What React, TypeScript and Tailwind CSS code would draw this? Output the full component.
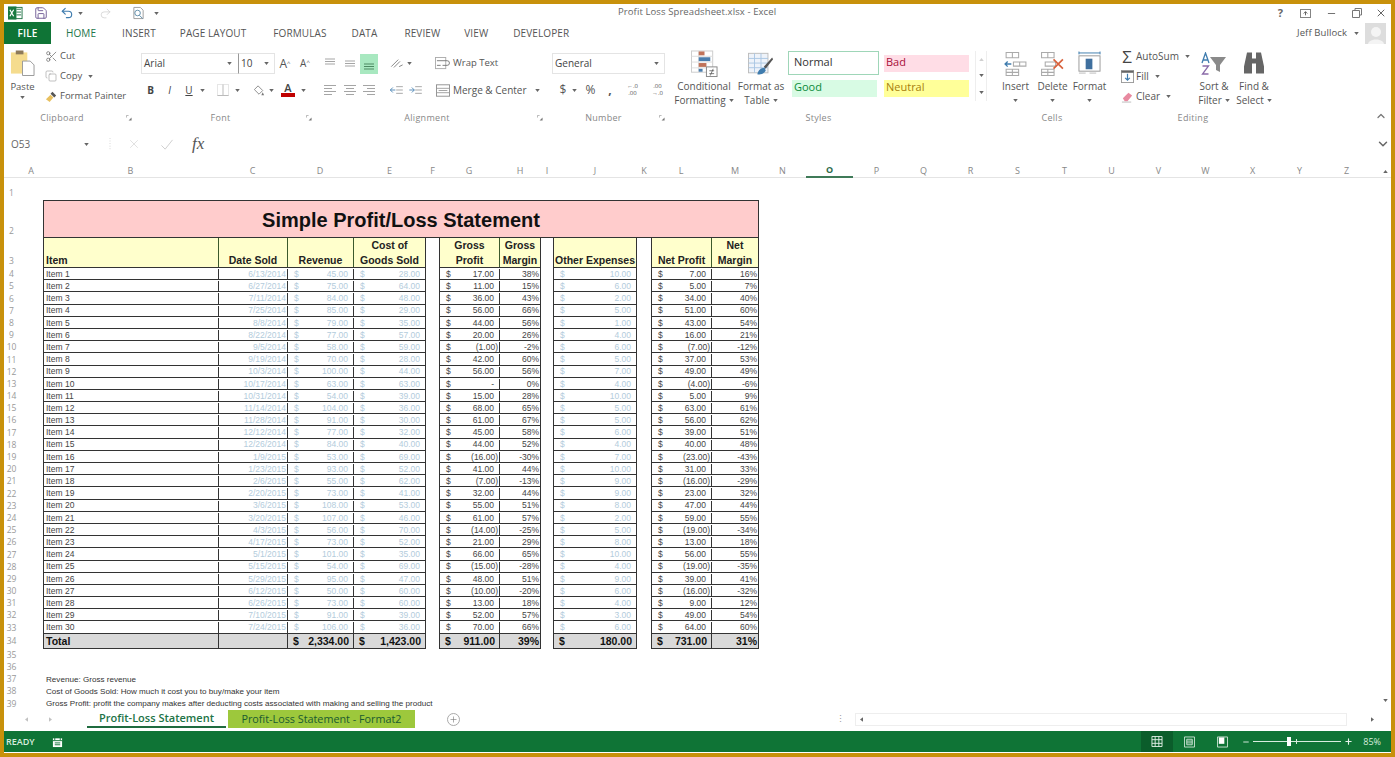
import type { ReactNode } from 'react';
import { ChevronDown, ChevronUp, Copy, Minus, Plus, Save, Scissors, Undo2, Redo2, X } from 'lucide-react';

const dates = ['6/13/2014', '6/27/2014', '7/11/2014', '7/25/2014', '8/8/2014', '8/22/2014', '9/5/2014', '9/19/2014', '10/3/2014', '10/17/2014', '10/31/2014', '11/14/2014', '11/28/2014', '12/12/2014', '12/26/2014', '1/9/2015', '1/23/2015', '2/6/2015', '2/20/2015', '3/6/2015', '3/20/2015', '4/3/2015', '4/17/2015', '5/1/2015', '5/15/2015', '5/29/2015', '6/12/2015', '6/26/2015', '7/10/2015', '7/24/2015'];
const revenue = [45, 75, 84, 85, 79, 77, 58, 70, 100, 63, 54, 104, 91, 77, 84, 53, 93, 55, 73, 108, 107, 56, 73, 101, 54, 95, 50, 73, 91, 106];
const cost = [28, 64, 48, 29, 35, 57, 59, 28, 44, 63, 39, 36, 30, 32, 40, 69, 52, 62, 41, 53, 46, 70, 52, 35, 69, 47, 60, 60, 39, 36];
const grossMargin = [38, 15, 43, 66, 56, 26, -2, 60, 56, 0, 28, 65, 67, 58, 52, -30, 44, -13, 44, 51, 57, -25, 29, 65, -28, 51, -20, 18, 57, 66];
const other = [10, 6, 2, 5, 1, 4, 6, 5, 7, 4, 10, 5, 5, 6, 4, 7, 10, 9, 9, 8, 2, 5, 8, 10, 4, 9, 6, 4, 3, 6];
const netMargin = [16, 7, 40, 60, 54, 21, -12, 53, 49, -6, 9, 61, 62, 51, 48, -43, 33, -29, 32, 44, 55, -34, 18, 55, -35, 41, -32, 12, 54, 60];

const columns: [string, number][] = [
  ['A', 24], ['B', 175], ['C', 69], ['D', 66], ['E', 73], ['F', 13], ['G', 60], ['H', 42], ['I', 12], ['J', 84], ['K', 14], ['L', 60], ['M', 48], ['N', 47],
  ['O', 47], ['P', 47], ['Q', 47], ['R', 47], ['S', 47], ['T', 47], ['U', 47], ['V', 47], ['W', 47], ['X', 47], ['Y', 47], ['Z', 47],
];

function money(value: number) {
  if (value === 0) return '-';
  const text = Math.abs(value).toFixed(2);
  return value < 0 ? `(${text})` : text;
}

function Caret({ className = '' }: { className?: string }) {
  return (
    <svg viewBox="0 0 6 4" className={`h-[3px] w-[5px] shrink-0 ${className}`}>
      <path d="M0 0h6L3 4z" fill="#666" />
    </svg>
  );
}

function Glyph({ children, className = 'h-[16px] w-[16px]' }: { children: ReactNode; className?: string }) {
  return (
    <svg viewBox="0 0 16 16" className={`shrink-0 ${className}`} fill="none" stroke="#8a8a8a" strokeWidth="1">
      {children}
    </svg>
  );
}

function Lines({ kind }: { kind: 'top' | 'mid' | 'bottom' | 'left' | 'center' | 'right' }) {
  const y = kind === 'top' ? [3, 5.5, 8] : kind === 'mid' ? [5, 7.5, 10] : kind === 'bottom' ? [8, 10.5, 13] : [3.5, 6.5, 9.5, 12.5];
  const x = (i: number): [number, number] => {
    if (kind === 'left') return i % 2 ? [2, 10] : [2, 14];
    if (kind === 'center') return i % 2 ? [4, 12] : [2, 14];
    if (kind === 'right') return i % 2 ? [6, 14] : [2, 14];
    return [3, 13];
  };
  return (
    <Glyph>
      {y.map((v, i) => (
        <line key={v} x1={x(i)[0]} x2={x(i)[1]} y1={v} y2={v} stroke={kind === 'bottom' ? '#4d8a63' : '#a5a5a5'} />
      ))}
    </Glyph>
  );
}

function SmallAction({ icon, label, caret, className = '' }: { icon: ReactNode; label: string; caret?: boolean; className?: string }) {
  return (
    <div className={`flex h-[20px] items-center ${className}`}>
      <span className="flex w-[16px] shrink-0 justify-center">{icon}</span>
      <span className="ml-[1px] whitespace-nowrap">{label}</span>
      {caret && <Caret className="ml-[6px]" />}
    </div>
  );
}

function LargeButton({ icon, lines, className }: { icon: ReactNode; lines: [string, string?]; className: string }) {
  return (
    <div className={`flex shrink-0 flex-col items-center pt-[5px] ${className}`}>
      <div className="flex h-[29px] items-center">{icon}</div>
      <div className="mt-[1px] flex h-[14px] items-center whitespace-nowrap">{lines[0]}</div>
      <div className="flex h-[14px] items-center gap-[3px] whitespace-nowrap">
        {lines[1]}
        <Caret />
      </div>
    </div>
  );
}

function Group({ label, launcher, className, children, labelClass = '' }: { label: string; launcher?: boolean; className: string; children: ReactNode; labelClass?: string }) {
  return (
    <div className={`flex shrink-0 flex-col ${className}`}>
      <div className="h-[64px]">{children}</div>
      <div className="mt-[2.500px] flex h-[14px] items-center text-[9px] tracking-[0.3px] text-[#888]">
        <span className={`flex-1 text-center ${labelClass}`}>{label}</span>
        {launcher && (
          <svg viewBox="0 0 7 7" className="mr-[3px] h-[6px] w-[6px]">
            <path d="M.5 3V.5H3" stroke="#aaa" fill="none" />
            <path d="M6.5 6.5H3l3.5-3.5z" fill="#777" />
          </svg>
        )}
      </div>
    </div>
  );
}

function TitleBar() {
  return (
    <div className="flex h-[18px] items-center text-[#666]">
      <svg viewBox="0 0 16 14" className="ml-[4px] h-[14px] w-[15px]">
        <rect x="6" y="1" width="9" height="12" fill="#fff" stroke="#217346" />
        <path d="M9 3h5M9 6h5M9 9h5" stroke="#217346" />
        <rect x="0" y="0" width="9" height="14" fill="#1a7a41" />
        <path d="M2 3.500l4 7M6 3.500l-4 7" stroke="#fff" strokeWidth="1.300" />
      </svg>
      <Save size={14} strokeWidth={1.6} className="ml-[11px] text-[#6f5a94]" />
      <Undo2 size={14} strokeWidth={2} className="ml-[12px] text-[#3f7cae]" />
      <Caret className="ml-[4px]" />
      <Redo2 size={13} strokeWidth={1.3} className="ml-[16px] text-[#ccc]" />
      <svg viewBox="0 0 14 14" className="ml-[20px] h-[14px] w-[13px]" fill="none">
        <path d="M2 1h7l3 3v9H2z" stroke="#999" />
        <circle cx="6" cy="7" r="3" stroke="#5b8aa8" />
        <path d="M8 9.500l3.500 3.500" stroke="#5b8aa8" />
      </svg>
      <Caret className="ml-[9px]" />
      <div className="mb-[2px] ml-[459px] w-[160px] text-[9.500px] tracking-[0.1px] whitespace-nowrap">Profit Loss Spreadsheet.xlsx - Excel</div>
      <div className="ml-auto flex items-center text-[#666]">
        <span className="text-[11px] font-bold">?</span>
        <svg viewBox="0 0 12 10" className="ml-[17px] h-[9px] w-[11px]" fill="none">
          <rect x=".5" y=".5" width="11" height="9" stroke="#777" />
          <path d="M6 7V3M4 5l2-2 2 2" stroke="#555" />
        </svg>
        <Minus size={11} strokeWidth={2} className="ml-[15px]" />
        <svg viewBox="0 0 10 10" className="ml-[15px] h-[10px] w-[10px]" fill="none">
          <path d="M3 2.500V.5h6.500V7H7.500M.5 2.500h7v7h-7z" stroke="#777" />
        </svg>
        <X size={12} strokeWidth={2} className="mr-[4px] ml-[13px]" />
      </div>
    </div>
  );
}

function TabRow() {
  return (
    <div className="flex h-[22px] items-center text-[10px] tracking-[0.1px] text-[#555]">
      <div className="flex h-[22px] w-[47px] items-center justify-center bg-[#0f7436] font-semibold text-white">FILE</div>
      <span className="ml-[15px] text-[#23764a]">HOME</span>
      <span className="ml-[26px]">INSERT</span>
      <span className="ml-[24px]">PAGE LAYOUT</span>
      <span className="ml-[27px]">FORMULAS</span>
      <span className="ml-[25px]">DATA</span>
      <span className="ml-[27px]">REVIEW</span>
      <span className="ml-[24px]">VIEW</span>
      <span className="ml-[25px]">DEVELOPER</span>
      <span className="ml-auto text-[9.500px]">Jeff Bullock</span>
      <Caret className="ml-[7px]" />
      <div className="mr-[5px] ml-[6px] flex h-[21px] w-[21px] items-end justify-center overflow-hidden bg-[#ddd]">
        <svg viewBox="0 0 20 20" className="h-[20px] w-[20px]">
          <circle cx="10" cy="8" r="5" fill="#f4f4f4" />
          <path d="M2 20c1-6 15-6 16 0z" fill="#f4f4f4" />
        </svg>
      </div>
    </div>
  );
}

function Ribbon() {
  return (
    <div className="flex h-[81px] text-[10px] text-[#555]">
      <Group label="Clipboard" launcher className="w-[131px]" labelClass="pr-[6px]">
        <div className="flex pt-[2px] text-[9.500px]">
          <div className="ml-[6px] flex w-[25px] flex-col items-center">
            <svg viewBox="0 0 26 28" className="mt-[3px] h-[28px] w-[25px]">
              <rect x="1" y="3" width="17" height="22" fill="#f5dc8e" />
              <rect x="6" y="1" width="8" height="4" fill="#8d7a5a" />
              <path d="M13 12h8l4 4v11H13z" fill="#fff" stroke="#999" />
            </svg>
            <span className="mt-[3px] h-[14px]">Paste</span>
            <Caret className="mt-[2px]" />
          </div>
          <div className="ml-[8px] flex flex-col">
            <SmallAction icon={<Scissors size={13} strokeWidth={1.3} className="text-[#666]" />} label="Cut" />
            <SmallAction icon={<Copy size={12} strokeWidth={1.2} className="text-[#999]" />} label="Copy" caret />
            <SmallAction
              icon={
                <svg viewBox="0 0 14 14" className="h-[13px] w-[13px]">
                  <path d="M8 2l4 4-2 2-4-4z" fill="#555" />
                  <path d="M6 5l3 3-4 5-4-3z" fill="#e8c060" />
                </svg>
              }
              label="Format Painter"
            />
          </div>
        </div>
      </Group>

      <Group label="Font" launcher className="w-[180px]">
        <div className="flex flex-col pt-[9px] pl-[6px]">
          <div className="flex h-[21px] items-center">
            <div className="flex h-[21px] w-[97px] items-center justify-between border-y border-l border-[#e4e4e4] pr-[6px] pl-[2px] text-[#444]">
              Arial
              <Caret />
            </div>
            <div className="flex h-[21px] w-[37px] items-center justify-between border border-[#e4e4e4] border-l-[#999] pr-[5px] pl-[2px] text-[#444]">
              10
              <Caret />
            </div>
            <span className="w-[20px] text-center text-[12px]">A<sup className="text-[6px]">^</sup></span>
            <span className="w-[20px] text-center text-[10px]">A<sup className="text-[6px]">^</sup></span>
          </div>
          <div className="mt-[6px] flex h-[20px] items-center">
            <span className="w-[19px] text-center font-bold text-[#444]">B</span>
            <span className="w-[19px] text-center italic text-[#444]">I</span>
            <span className="w-[20px] text-center text-[#444] underline">U</span>
            <Caret className="mr-[10px] ml-[1px]" />
            <Glyph>
              <rect x="2.500" y="2.500" width="11" height="11" stroke="#e6e6e6" />
              <path d="M8 2.500v11M2.500 13.500h11" stroke="#bbb" />
            </Glyph>
            <Caret className="mr-[12px] ml-[4px]" />
            <svg viewBox="0 0 14 14" className="h-[13px] w-[14px]" fill="none">
              <path d="M6 2l5 5-4 4-5-5z" stroke="#888" />
              <path d="M11 9l1.500 3h-3z" fill="#777" />
            </svg>
            <Caret className="mr-[6px] ml-[3px]" />
            <div className="flex w-[16px] flex-col items-center leading-[10px]">
              <span className="text-[11px] font-semibold text-[#444]">A</span>
              <div className="h-[4px] w-[14px] bg-[#c00000]" />
            </div>
            <Caret className="ml-[5px]" />
          </div>
        </div>
      </Group>

      <Group label="Alignment" launcher className="w-[231px]" labelClass="pl-[2px]">
        <div className="flex flex-col pt-[9px] pl-[5px] text-[9.500px]">
          <div className="flex h-[21px] items-center">
            <span className="flex w-[20px] justify-center"><Lines kind="top" /></span>
            <span className="flex w-[20px] justify-center"><Lines kind="mid" /></span>
            <span className="flex h-[20px] w-[18px] items-center justify-center bg-[#a8e8c0]"><Lines kind="bottom" /></span>
            <svg viewBox="0 0 16 16" className="ml-[11px] h-[14px] w-[15px]" fill="none">
              <path d="M2 11L10 3M5 12L12 5M11 11l4-2" stroke="#777" />
            </svg>
            <Caret className="ml-[3px]" />
            <svg viewBox="0 0 16 14" className="ml-[23px] h-[13px] w-[15px]" fill="none">
              <rect x=".5" y=".5" width="11" height="12" stroke="#aaa" />
              <path d="M2 4h11a2 2 0 010 5H8M2 9h4" stroke="#777" />
            </svg>
            <span className="ml-[3px]">Wrap Text</span>
          </div>
          <div className="mt-[6px] flex h-[20px] items-center">
            <span className="flex w-[20px] justify-center"><Lines kind="left" /></span>
            <span className="flex w-[20px] justify-center"><Lines kind="center" /></span>
            <span className="flex w-[18px] justify-center"><Lines kind="right" /></span>
            <svg viewBox="0 0 16 12" className="ml-[12px] h-[10px] w-[14px]" fill="none">
              <path d="M7 2h8M7 6h8M7 10h8" stroke="#999" />
              <path d="M6 6H0M3 3L0 6l3 3" stroke="#3f7cae" />
            </svg>
            <svg viewBox="0 0 16 12" className="ml-[5px] h-[10px] w-[14px]" fill="none">
              <path d="M7 2h8M7 6h8M7 10h8" stroke="#999" />
              <path d="M0 6h6M3 3l3 3-3 3" stroke="#3f7cae" />
            </svg>
            <svg viewBox="0 0 16 14" className="ml-[13px] h-[13px] w-[14px]" fill="none">
              <rect x=".5" y=".5" width="15" height="13" stroke="#888" />
              <path d="M.5 4.500h15M.5 9.500h15M3 7h10" stroke="#999" />
            </svg>
            <span className="ml-[3px] text-[10px] whitespace-nowrap">Merge &amp; Center</span>
            <Caret className="ml-[8px]" />
          </div>
        </div>
      </Group>

      <Group label="Number" launcher className="w-[122px]" labelClass="pl-[2px]">
        <div className="flex flex-col pt-[9px] pl-[6px]">
          <div className="flex h-[21px] w-[113px] items-center justify-between border border-[#e4e4e4] pr-[5px] pl-[2px] text-[#444]">
            General
            <Caret />
          </div>
          <div className="mt-[6px] flex h-[20px] items-center">
            <span className="ml-[4px] w-[14px] text-center text-[12px]">$</span>
            <Caret className="ml-[2px]" />
            <span className="ml-[5px] w-[17px] text-center text-[12px]">%</span>
            <span className="ml-[7px] w-[8px] text-center text-[12px] font-bold leading-[10px]">,</span>
            <span className="ml-[9px] w-[19px] text-center text-[6px] leading-[7px]">←.0<br />.00</span>
            <span className="ml-[6px] w-[19px] text-center text-[6px] leading-[7px]">.00<br />→.0</span>
          </div>
        </div>
      </Group>

      <Group label="Styles" className="w-[327px]" labelClass="pr-[26px]">
        <div className="flex">
          <LargeButton
            className="ml-[6px] w-[60px]"
            lines={['Conditional', 'Formatting']}
            icon={
              <svg viewBox="0 0 28 28" className="h-[28px] w-[27px]" fill="none">
                <rect x=".5" y=".5" width="22" height="22" stroke="#ccc" />
                <path d="M.5 6h22M.5 12h22M.5 18h22M8 .5v22" stroke="#ddd" />
                <rect x="8" y="1" width="6" height="4" fill="#c0735a" />
                <rect x="8" y="7" width="12" height="4" fill="#4a7eae" />
                <rect x="8" y="13" width="8" height="4" fill="#c0735a" />
                <rect x="8" y="19" width="4" height="3" fill="#4a7eae" />
                <rect x="16" y="17" width="11" height="10" fill="#fff" stroke="#888" />
                <path d="M19 21h5M19 24h5M23 19l-3 7" stroke="#555" strokeWidth=".8" />
              </svg>
            }
          />
          <LargeButton
            className="w-[54px]"
            lines={['Format as', 'Table']}
            icon={
              <svg viewBox="0 0 28 28" className="h-[28px] w-[26px]" fill="none">
                <rect x=".5" y="2.500" width="21" height="21" fill="#eef3fa" stroke="#bbb" />
                <path d="M.5 8h21M.5 13h21M.5 18h21M7 2.500v21M14 2.500v21" stroke="#a9c6e3" />
                <path d="M17 17L26 7l1 2-8 10z" fill="#555" />
                <path d="M10 25c1-5 5-7 8-7l1 3c-1 3-5 5-9 4z" fill="#3f7cae" />
              </svg>
            }
          />
          <div className="grid grid-cols-[91px_85px] grid-rows-[24px_22px] items-center gap-x-[5px] gap-y-[2px] pt-[7px]">
            <div className="flex h-[24px] items-center border border-[#9fd6b8] pb-[1px] pl-[5px] text-[11px] text-[#333]">Normal</div>
            <div className="flex h-[17px] items-center bg-[#ffdde6] pb-[1px] pl-[2px] text-[11px] text-[#a8103a]">Bad</div>
            <div className="ml-[4px] flex h-[17px] w-[85px] items-center bg-[#d8fbe4] pb-[1px] pl-[2px] text-[11px] text-[#0a8a3a]">Good</div>
            <div className="flex h-[17px] items-center bg-[#ffff99] pb-[1px] pl-[2px] text-[11px] text-[#a8800c]">Neutral</div>
          </div>
          <div className="mt-[7px] ml-[6px] flex h-[50px] w-[12px] flex-col items-center justify-around border-x border-[#eee]">
            <Caret className="rotate-180 opacity-30" />
            <Caret />
            <Caret />
          </div>
        </div>
      </Group>

      <Group label="Cells" className="w-[110px]" labelClass="pl-[4px]">
        <div className="flex pl-[2px]">
          <LargeButton
            className="w-[37px]"
            lines={['Insert']}
            icon={
              <svg viewBox="0 0 24 24" className="h-[25px] w-[25px]" fill="none" stroke="#aaa">
                <path d="M3 1.500h12v5H3zM9 1.500v5M10 10.500h12v4H10zM16 10.500v4M3 17.500h12v6H3zM9 17.500v6M3 20.500h12" />
                <path d="M8 12.500H2M4.500 10l-2.500 2.500L4.500 15" stroke="#3f7cae" strokeWidth="1.300" />
              </svg>
            }
          />
          <LargeButton
            className="w-[37px]"
            lines={['Delete']}
            icon={
              <svg viewBox="0 0 24 24" className="h-[25px] w-[25px]" fill="none" stroke="#aaa">
                <path d="M1.500 1.500h12v5h-12zM7.500 1.500v5M5 10.500h10v4H5zM1.500 17.500h12v6h-12zM7.500 17.500v6M1.500 20.500h12" />
                <path d="M13 8l9 9M22 8l-9 9" stroke="#d8613c" strokeWidth="1.600" />
              </svg>
            }
          />
          <LargeButton
            className="w-[37px]"
            lines={['Format']}
            icon={
              <svg viewBox="0 0 24 26" className="h-[27px] w-[23px]" fill="none" stroke="#888">
                <path d="M1 2h22M1 .5v3M23 .5v3" stroke="#3f7cae" />
                <rect x="1" y="5" width="22" height="16" stroke="#999" />
                <rect x="8" y="8" width="7" height="11" fill="#3f6f9e" stroke="none" />
                <path d="M1 23h7M12 23h7" stroke="#bbb" />
              </svg>
            }
          />
        </div>
      </Group>

      <Group label="Editing" className="w-[170px]" labelClass="pl-[6px]">
        <div className="flex">
          <div className="ml-[14px] flex w-[73px] flex-col pt-[2px]">
            <SmallAction icon={<span className="text-[17px] leading-none text-[#444]">Σ</span>} label="AutoSum" caret />
            <SmallAction
              icon={
                <svg viewBox="0 0 14 14" className="h-[13px] w-[13px]" fill="none">
                  <rect x=".5" y=".5" width="13" height="13" stroke="#999" />
                  <path d="M.5 2h13" stroke="#666" strokeWidth="2" />
                  <path d="M7 4v7M4.500 8.500L7 11l2.500-2.500" stroke="#3f7cae" strokeWidth="1.300" />
                </svg>
              }
              label="Fill"
              caret
            />
            <SmallAction
              icon={
                <svg viewBox="0 0 14 14" className="h-[13px] w-[13px]">
                  <path d="M2 9l6-6 4 3-5 6H4z" fill="#e88aa0" />
                  <path d="M1 13h10" stroke="#bbb" />
                </svg>
              }
              label="Clear"
              caret
            />
          </div>
          <LargeButton
            className="ml-[2px] w-[40px]"
            lines={['Sort &', 'Filter']}
            icon={
              <svg viewBox="0 0 26 24" className="h-[24px] w-[26px]" fill="none">
                <path d="M1 11L4.500 1 8 11M2.200 8h4.600" stroke="#3f7cae" strokeWidth="1.300" />
                <path d="M1.500 14h6l-6 8h6" stroke="#8a6aa8" strokeWidth="1.300" />
                <path d="M9 5h16l-6 8v7l-4-2v-5z" fill="#8a8a8a" />
              </svg>
            }
          />
          <LargeButton
            className="w-[40px]"
            lines={['Find &', 'Select']}
            icon={
              <svg viewBox="0 0 24 24" className="h-[25px] w-[24px]">
                <path d="M5 1h5v6h4V1h5l3 14v7h-8V12h-4v10H2v-7z" fill="#666" />
              </svg>
            }
          />
        </div>
      </Group>

      <div className="ml-auto flex items-end pr-[4px] pb-[3px]">
        <ChevronUp size={12} strokeWidth={2.5} className="text-[#777]" />
      </div>
    </div>
  );
}

function FormulaBar() {
  return (
    <div className="mt-[8px] flex h-[22px] items-center text-[#666]">
      <span className="ml-[7px] w-[73px] text-[10px]">O53</span>
      <Caret />
      <svg viewBox="0 0 2 14" className="ml-[20px] h-[12px] w-[2px]">
        <path d="M1 0v14" stroke="#ccc" strokeDasharray="1 2" />
      </svg>
      <X size={14} strokeWidth={1} className="ml-[16px] text-[#ccc]" />
      <svg viewBox="0 0 14 14" className="ml-[19px] h-[13px] w-[14px]" fill="none">
        <path d="M1 8l4 4 8-10" stroke="#ccc" />
      </svg>
      <span className="ml-[18px] font-['Liberation_Serif',serif] text-[17px] italic text-[#555]">fx</span>
      <ChevronDown size={14} strokeWidth={2.5} className="mr-[1px] ml-auto text-[#666]" />
    </div>
  );
}

function ColumnHeaders() {
  return (
    <div className="mt-[10px] flex h-[13px] items-center border-b border-[#e4e4e4] pl-[15px] text-[9px] text-[#888]">
      {columns.map(([name, width]) => (
        <div
          key={name}
          className={name === 'O' ? 'flex h-[13px] items-center justify-center border-b-2 border-[#3f7a58] font-bold text-[#2f6b4a]' : 'flex items-center justify-center'}
          style={{ width }}
        >
          {name}
        </div>
      ))}
      <div className="mr-[3px] ml-auto"><Caret className="rotate-180" /></div>
    </div>
  );
}

function RowNumbers() {
  const numbers = Array.from({ length: 39 }, (_, i) => i + 1);
  return (
    <div className="flex w-[15px] shrink-0 flex-col text-[8.500px] text-[#999]">
      {numbers.map((n) => (
        <div
          key={n}
          className={
            n === 1 ? 'flex h-[22px] items-end justify-center'
            : n === 2 ? 'flex h-[38px] items-end justify-center'
            : n === 3 ? 'flex h-[30px] items-end justify-center'
            : n === 34 ? 'flex h-[15px] items-center justify-center pt-[1px]'
            : 'flex h-[12.200px] items-center justify-center pt-[1px]'
          }
        >
          {n}
        </div>
      ))}
    </div>
  );
}

const dataRow = 'flex h-[12.200px] border-b border-[#333] pt-[1px] text-[8.500px] leading-none text-[#444]';
const totalRow = 'flex h-[14px] bg-[#d9d9d9] text-[10.500px] leading-none font-bold text-[#111]';
const headCell = 'flex flex-col items-center justify-end gap-[3px] border-r border-[#3c5a2c] bg-[#ffffcc] pb-[1px] text-center text-[10.500px] leading-[12px] font-bold text-[#222] last:border-r-0';
const cell = 'flex items-center border-r border-[#333] last:border-r-0';

function Money({ value, className, light }: { value: number; className: string; light?: boolean }) {
  return (
    <div className={`${cell} justify-between pl-[6px] ${value < 0 ? 'pr-[1px]' : 'pr-[5px]'} ${light ? 'text-[#b3ccdc]' : ''} ${className}`}>
      <span>$</span>
      <span>{money(value)}</span>
    </div>
  );
}

function Total({ value, className }: { value: string; className: string }) {
  return (
    <div className={`${cell} justify-between pt-[1px] pr-[4px] pl-[5px] ${className}`}>
      <span>$</span>
      <span>{value}</span>
    </div>
  );
}

function Sheet() {
  return (
    <div className="flex h-[532px] overflow-hidden font-['Liberation_Sans',sans-serif]">
      <div className="font-['Open_Sans',sans-serif]"><RowNumbers /></div>
      <div className="ml-[24px] flex w-[716px] shrink-0 flex-col pt-[22px]">
        <div className="flex h-[38px] shrink-0 items-center justify-center border border-[#333] bg-[#ffcccc] pt-[1px] text-[20px] font-bold text-[#111]">
          Simple Profit/Loss Statement
        </div>
        <div className="flex shrink-0">
          <div className="w-[383px] border-x border-b border-[#333]">
            <div className="flex h-[30px] border-b border-[#333]">
              <div className={`${headCell} w-[175px] !items-start pl-[2px]`}>Item</div>
              <div className={`${headCell} w-[69px]`}>Date Sold</div>
              <div className={`${headCell} w-[66px]`}>Revenue</div>
              <div className={`${headCell} flex-1`}><span>Cost of</span><span>Goods Sold</span></div>
            </div>
            {dates.map((date, i) => (
              <div key={date} className={dataRow}>
                <div className={`${cell} w-[175px] pl-[2px]`}>Item {i + 1}</div>
                <div className={`${cell} w-[69px] justify-end pr-[1px] text-[#b3ccdc]`}>{date}</div>
                <Money value={revenue[i]} className="w-[66px]" light />
                <Money value={cost[i]} className="flex-1" light />
              </div>
            ))}
            <div className={totalRow}>
              <div className={`${cell} w-[175px] pt-[1px] pl-[2px]`}>Total</div>
              <div className={`${cell} w-[69px]`} />
              <Total value="2,334.00" className="w-[66px]" />
              <Total value="1,423.00" className="flex-1" />
            </div>
          </div>

          <div className="ml-[13px] w-[102px] border-x border-b border-[#333]">
            <div className="flex h-[30px] border-b border-[#333]">
              <div className={`${headCell} w-[60px]`}><span>Gross</span><span>Profit</span></div>
              <div className={`${headCell} flex-1`}><span>Gross</span><span>Margin</span></div>
            </div>
            {dates.map((date, i) => (
              <div key={date} className={dataRow}>
                <Money value={revenue[i] - cost[i]} className="w-[60px]" />
                <div className={`${cell} flex-1 justify-end pr-[1px]`}>{grossMargin[i]}%</div>
              </div>
            ))}
            <div className={totalRow}>
              <Total value="911.00" className="w-[60px]" />
              <div className={`${cell} flex-1 justify-end pt-[1px] pr-[1px]`}>39%</div>
            </div>
          </div>

          <div className="ml-[12px] w-[84px] border-x border-b border-[#333]">
            <div className="flex h-[30px] border-b border-[#333]">
              <div className={`${headCell} flex-1 whitespace-nowrap`}>Other Expenses</div>
            </div>
            {dates.map((date, i) => (
              <div key={date} className={dataRow}>
                <Money value={other[i]} className="flex-1" light />
              </div>
            ))}
            <div className={totalRow}>
              <Total value="180.00" className="flex-1" />
            </div>
          </div>

          <div className="ml-[14px] w-[108px] border-x border-b border-[#333]">
            <div className="flex h-[30px] border-b border-[#333]">
              <div className={`${headCell} w-[60px]`}>Net Profit</div>
              <div className={`${headCell} flex-1`}><span>Net</span><span>Margin</span></div>
            </div>
            {dates.map((date, i) => (
              <div key={date} className={dataRow}>
                <Money value={revenue[i] - cost[i] - other[i]} className="w-[60px]" />
                <div className={`${cell} flex-1 justify-end pr-[1px]`}>{netMargin[i]}%</div>
              </div>
            ))}
            <div className={totalRow}>
              <Total value="731.00" className="w-[60px]" />
              <div className={`${cell} flex-1 justify-end pt-[1px] pr-[1px]`}>31%</div>
            </div>
          </div>
        </div>
        <div className="mt-[24.400px] flex shrink-0 flex-col pt-[1px] pl-[3px] text-[8.100px] text-[#333]">
          <div className="flex h-[12.200px] items-center whitespace-nowrap">Revenue: Gross revenue</div>
          <div className="flex h-[12.200px] items-center whitespace-nowrap">Cost of Goods Sold: How much it cost you to buy/make your item</div>
          <div className="flex h-[12.200px] items-center whitespace-nowrap">Gross Profit: profit the company makes after deducting costs associated with making and selling the product</div>
        </div>
      </div>
      <div className="ml-auto flex items-end pr-[3px] pb-[8px]">
        <Caret />
      </div>
    </div>
  );
}

function SheetTabs() {
  return (
    <div className="flex h-[21px] items-center pb-[3px] text-[#999]">
      <Caret className="ml-[20px] rotate-90 opacity-40" />
      <Caret className="ml-[19px] -rotate-90 opacity-40" />
      <div className="ml-[34px] flex h-[18px] w-[139px] items-center justify-center border-b-2 border-[#1f6b3f] text-[11px] font-semibold text-[#217346]">
        Profit-Loss Statement
      </div>
      <div className="ml-[2px] flex h-[18px] w-[187px] items-center justify-center bg-[#9dc83c] text-[10.800px] font-medium text-[#1a5a30]">
        Profit-Loss Statement - Format2
      </div>
      <div className="ml-[32px] flex h-[13px] w-[13px] items-center justify-center rounded-full border border-[#aaa]">
        <Plus size={9} strokeWidth={1.6} className="text-[#777]" />
      </div>
      <span className="ml-[376px] text-[9px]">⋮</span>
      <div className="ml-[10px] flex h-[13px] w-[492px] items-center border border-[#eee] pl-[3px]">
        <Caret className="rotate-90" />
      </div>
      <Caret className="ml-[23px] -rotate-90" />
    </div>
  );
}

function StatusBar() {
  return (
    <div className="flex h-[21px] items-center bg-[#0f7436] text-white">
      <span className="ml-[2px] text-[9px] font-semibold text-[#d8ecdf]">READY</span>
      <svg viewBox="0 0 12 12" className="ml-[17px] h-[12px] w-[11px]" fill="none">
        <rect x="1" y="2" width="10" height="9.500" fill="#fff" />
        <path d="M1 4.500h10M3 1v3M9 1v3" stroke="#0f7436" />
        <path d="M3 7h6M3 9h6" stroke="#0f7436" />
      </svg>
      <div className="ml-auto flex h-[21px] w-[32px] items-center justify-center bg-[#0b5d2b]">
        <svg viewBox="0 0 12 12" className="h-[11px] w-[12px]" fill="none" stroke="#e6f2ea">
          <path d="M.5.500h11v11H.5zM.5 4h11M.5 8h11M4 .5v11M8 .5v11" />
        </svg>
      </div>
      <svg viewBox="0 0 12 12" className="ml-[11px] h-[12px] w-[11px]" fill="none" stroke="#cfe5d7">
        <path d="M.5.500h11v11H.5zM3 3h6v6H3zM3 5h6M3 7h6" />
      </svg>
      <svg viewBox="0 0 12 12" className="ml-[22px] h-[12px] w-[11px]">
        <path d="M.5.500h11v11H.5z" fill="none" stroke="#cfe5d7" />
        <path d="M2 1h6v7H2z" fill="#fff" />
      </svg>
      <Minus size={8} strokeWidth={3} className="ml-[14px] text-[#cfe5d7]" />
      <div className="relative mx-[3px] h-[1px] w-[88px] bg-[#d8ecdf]">
        <div className="absolute top-[-4px] left-[34px] h-[9px] w-[4px] bg-white" />
        <div className="absolute top-[-2px] left-[43px] h-[5px] w-[1px] bg-[#d8ecdf]" />
      </div>
      <Plus size={9} strokeWidth={3} className="text-[#e6f2ea]" />
      <span className="mr-[10px] ml-[10px] text-[9px] text-[#d8ecdf]">85%</span>
    </div>
  );
}

export default function App() {
  return (
    <div className="flex h-[757px] w-[1395px] flex-col overflow-hidden border-4 border-[#c8910b] bg-white font-['Open_Sans',sans-serif]">
      <TitleBar />
      <TabRow />
      <Ribbon />
      <FormulaBar />
      <ColumnHeaders />
      <Sheet />
      <SheetTabs />
      <StatusBar />
    </div>
  );
}
